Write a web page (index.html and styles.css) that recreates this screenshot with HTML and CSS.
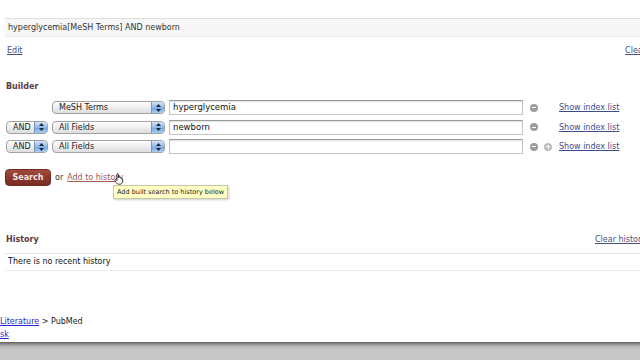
FILE: index.html
```html
<!DOCTYPE html>
<html lang="en">
<head>
  <meta charset="UTF-8">
  <title>PubMed Advanced Search Builder</title>
  <link rel="stylesheet" href="styles.css">
</head>
<body>
<div class="page">
  <div class="query-box">hyperglycemia[MeSH Terms] AND newborn</div>
  <div class="query-links">
    <a href="#" class="plain-link">Edit</a>
    <a href="#" class="plain-link">Clear</a>
  </div>

  <h2 class="section-title builder-title">Builder</h2>

  <div class="builder">
    <div class="builder-row">
      <span class="bool-spacer"></span>
      <span class="popup field-popup">MeSH Terms<span class="popup-arrows"><svg width="11" height="12" viewBox="0 0 11 12"><path d="M3 5 L5.5 2 L8 5 Z M3 7 L5.5 10 L8 7 Z" fill="#1e2a3a"/></svg></span></span>
      <span class="term-input">hyperglycemia</span>
      <span class="row-icons"><span class="round-btn minus"></span></span>
      <a href="#" class="index-link">Show index list</a>
    </div>
    <div class="builder-row">
      <span class="popup bool-popup">AND<span class="popup-arrows"><svg width="11" height="12" viewBox="0 0 11 12"><path d="M3 5 L5.5 2 L8 5 Z M3 7 L5.5 10 L8 7 Z" fill="#1e2a3a"/></svg></span></span>
      <span class="popup field-popup">All Fields<span class="popup-arrows"><svg width="11" height="12" viewBox="0 0 11 12"><path d="M3 5 L5.5 2 L8 5 Z M3 7 L5.5 10 L8 7 Z" fill="#1e2a3a"/></svg></span></span>
      <span class="term-input">newborn</span>
      <span class="row-icons"><span class="round-btn minus"></span></span>
      <a href="#" class="index-link">Show index list</a>
    </div>
    <div class="builder-row">
      <span class="popup bool-popup">AND<span class="popup-arrows"><svg width="11" height="12" viewBox="0 0 11 12"><path d="M3 5 L5.5 2 L8 5 Z M3 7 L5.5 10 L8 7 Z" fill="#1e2a3a"/></svg></span></span>
      <span class="popup field-popup">All Fields<span class="popup-arrows"><svg width="11" height="12" viewBox="0 0 11 12"><path d="M3 5 L5.5 2 L8 5 Z M3 7 L5.5 10 L8 7 Z" fill="#1e2a3a"/></svg></span></span>
      <span class="term-input"></span>
      <span class="row-icons"><span class="round-btn minus"></span><span class="round-btn plus"></span></span>
      <a href="#" class="index-link">Show index list</a>
    </div>
  </div>

  <div class="search-row">
    <button class="search-button">Search</button>
    <span class="or-text">or</span>
    <a href="#" class="history-link">Add to history</a>
    <svg class="hand-cursor" width="10" height="12" viewBox="0 0 10 12">
      <path d="M3 1.2 C3 0.4 4.4 0.4 4.4 1.2 L4.4 5 L4.6 3.8 C4.8 3.2 6 3.3 6 4 L6 5 C6.2 4.4 7.3 4.5 7.3 5.2 L7.3 5.8 C7.5 5.2 8.6 5.3 8.6 6 L8.6 8.4 C8.6 10 7.6 11.2 6.2 11.2 L4.6 11.2 C3.6 11.2 2.9 10.6 2.3 9.7 L0.9 7.4 C0.5 6.7 1.4 6 2 6.6 L3 7.6 Z" fill="#fff" stroke="#111" stroke-width="0.8" stroke-linejoin="round"/>
    </svg>
    <span class="tooltip">Add built search to history below</span>
  </div>

  <div class="history-head">
    <h2 class="section-title">History</h2>
    <a href="#" class="plain-link">Clear history</a>
  </div>
  <div class="history-box">There is no recent history</div>
</div>

<div class="breadcrumb">
  <div><a href="#" class="blue-link">Literature</a> &gt; PubMed</div>
  <div><a href="#" class="blue-link">sk</a></div>
</div>

<div class="desktop"></div>
</body>
</html>
```

FILE: styles.css
```css
body {
  margin: 0;
  height: 360px;
  overflow: hidden;
  background-color: white;
  font-family: 'DejaVu Sans', Verdana, sans-serif;
  font-size: 8px;
  color: #1a1a1a;
}
a {
  text-decoration: underline;
}
.page {
  width: 641px;
  padding: 18px 0 0 5px;
}
.query-box {
  width: 660px;
  height: 17px;
  line-height: 17px;
  padding-left: 3px;
  background-color: #f7f7f7;
  border-top: 1px solid #dedede;
  border-bottom: 1px solid #ececec;
  color: #333;
}
.query-links {
  display: flex;
  justify-content: space-between;
  margin-top: 9px;
  padding: 0 0 0 2px;
  line-height: 10px;
}
.plain-link {
  color: #4a4f78;
}
.section-title {
  margin: 0;
  font-size: 8px;
  line-height: 10px;
  font-weight: bold;
  color: #5b3b3f;
  padding-left: 1px;
}
.builder-title {
  margin-top: 26px;
}
.builder {
  margin-top: 8px;
  display: flex;
  flex-direction: column;
  gap: 4.5px;
}
.builder-row {
  display: flex;
  align-items: center;
  height: 15px;
}
.bool-spacer {
  width: 42px;
  margin-left: 1px;
  flex: none;
}
.popup {
  position: relative;
  display: flex;
  align-items: center;
  height: 13px;
  box-sizing: border-box;
  padding-left: 6px;
  border: 1px solid #a2a2a2;
  border-radius: 4px;
  background: linear-gradient(#ffffff, #ececec 55%, #dedede);
  color: #222;
  font-weight: 500;
  flex: none;
  overflow: hidden;
}
.bool-popup {
  width: 42px;
  margin-left: 1px;
}
.field-popup {
  width: 113px;
  margin-left: 4px;
}
.popup-arrows {
  position: absolute;
  right: 0;
  top: 0;
  bottom: 0;
  width: 12px;
  display: flex;
  align-items: center;
  justify-content: center;
  background: linear-gradient(#d3e4f8, #8fb9ea 50%, #6ea3e2 51%, #a9cdf3);
  border-left: 1px solid #7c95b4;
}
.term-input {
  width: 354px;
  height: 15px;
  box-sizing: border-box;
  margin-left: 4px;
  padding-left: 3px;
  line-height: 13px;
  border: 1px solid #c4c4c4;
  border-top-color: #9a9a9a;
  background-color: white;
  box-shadow: inset 0 1px 1px rgba(0,0,0,0.12);
  color: #111;
  font-size: 8.5px;
  flex: none;
}
.row-icons {
  display: flex;
  gap: 6px;
  width: 29px;
  margin-left: 7px;
  flex: none;
}
.round-btn {
  position: relative;
  width: 8px;
  height: 8px;
  border-radius: 50%;
  background-color: #9c9c9c;
}
.round-btn::before {
  content: '';
  position: absolute;
  left: 2px;
  top: 3.5px;
  width: 4px;
  height: 1px;
  background-color: white;
}
.plus {
  background-color: #bdbdbd;
}
.plus::after {
  content: '';
  position: absolute;
  left: 3.5px;
  top: 2px;
  width: 1px;
  height: 4px;
  background-color: white;
}
.index-link {
  color: #3c4c8a;
}
.search-row {
  position: relative;
  display: flex;
  align-items: center;
  margin-top: 15px;
  height: 17px;
}
.search-button {
  width: 46px;
  height: 17px;
  padding: 0;
  border: 1px solid #6e2c22;
  border-radius: 4px;
  background: linear-gradient(#a24a3c, #86352a 60%, #7a2e24);
  color: #f4e8e6;
  font-family: inherit;
  font-size: 8px;
  font-weight: bold;
}
.or-text {
  margin-left: 4px;
  color: #333;
  font-weight: 500;
}
.history-link {
  margin-left: 4px;
  color: #a4584e;
}
.hand-cursor {
  position: absolute;
  left: 109px;
  top: 4px;
}
.tooltip {
  position: absolute;
  left: 108px;
  top: 16px;
  height: 12px;
  line-height: 12px;
  padding: 0 3px;
  background-color: #ffffc6;
  border: 1px solid #c9c9a0;
  box-shadow: 1px 1px 2px rgba(0,0,0,0.2);
  font-size: 6.5px;
  color: #222;
  white-space: nowrap;
}
.history-head {
  display: flex;
  justify-content: space-between;
  margin-top: 49px;
  line-height: 10px;
}
.history-box {
  width: 660px;
  height: 16px;
  margin-top: 8px;
  line-height: 16px;
  padding-left: 3px;
  border-top: 1px solid #e6e6e6;
  border-bottom: 1px solid #ececec;
  color: #111;
}
.breadcrumb {
  margin-top: 44px;
  line-height: 13px;
  color: #222;
}
.blue-link {
  color: #2a2ad0;
}
.desktop {
  margin-top: 1px;
  height: 30px;
  background: linear-gradient(#5e5e5e, #8a8a8a 2px, #b4b4b4 4px, #c6c6c6 7px, #cbcbcb);
}
```
